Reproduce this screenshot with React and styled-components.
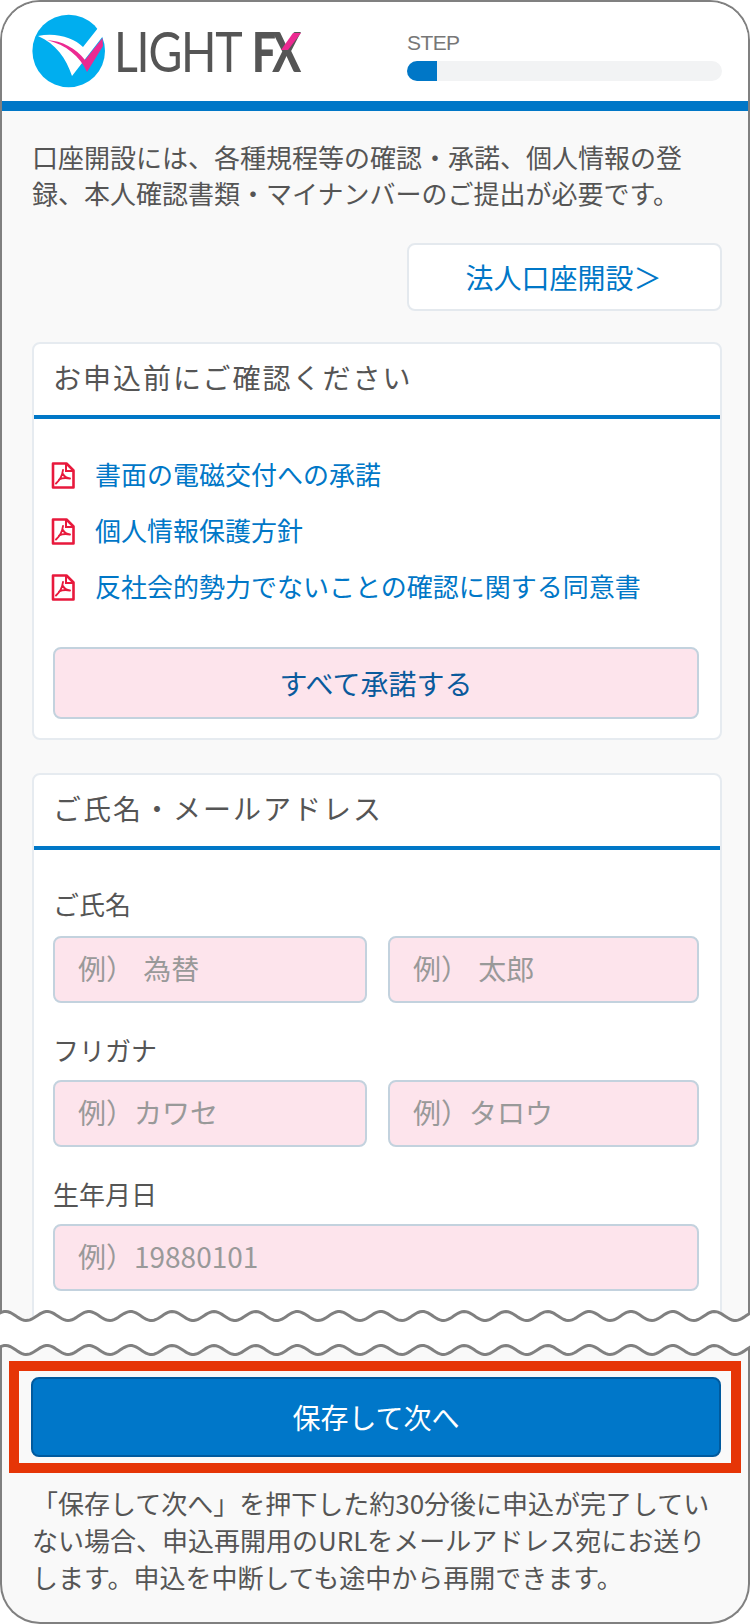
import React from 'react'
import styled, { createGlobalStyle } from 'styled-components'

const GlobalStyle = createGlobalStyle`
    html, body {
        margin: 0;
        padding: 0;
        background: #fff;
    }
    body {
        font-family: "Noto Sans CJK JP", "Liberation Sans", sans-serif;
        color: #555;
    }
    * {
        box-sizing: border-box;
    }
`

const Page = styled.div`
    position: relative;
    width: 750px;
    height: 1624px;
    overflow: hidden;
`

const TopPanel = styled.div`
    height: 1333px;
    background: #f9f9f9;
    border: 2px solid #808080;
    border-bottom: 0;
    border-radius: 40px 40px 0 0;
    overflow: hidden;
`

const BottomPanel = styled.div`
    height: 291px;
    padding: 28px 7px 0;
    background: #f9f9f9;
    border: 2px solid #808080;
    border-top: 0;
    border-radius: 0 0 40px 40px;
`

const Header = styled.header`
    display: flex;
    align-items: flex-start;
    justify-content: space-between;
    height: 109px;
    padding: 0 26px 0 30px;
    background: #fff;
    border-bottom: 10px solid #0077c7;
`

const LogoMark = styled.svg`
    display: block;
    margin-top: 11px;
`

const StepBlock = styled.div`
    width: 315px;
    margin-top: 29px;
`

const StepLabel = styled.div`
    font-family: "Liberation Sans", sans-serif;
    font-size: 21px;
    letter-spacing: -0.6px;
    line-height: 24px;
    color: #777;
`

const StepTrack = styled.div`
    height: 20px;
    margin-top: 6px;
    border-radius: 10px;
    background: #f2f3f4;
    overflow: hidden;
`

const StepFill = styled.div`
    height: 100%;
    width: ${props => props.$width}px;
    background: #0077c7;
`

const Content = styled.main`
    padding: 28px 26px 0 30px;
`

const Intro = styled.p`
    margin: 0;
    font-size: 26px;
    line-height: 36px;
    color: #555;
`

const CorporateRow = styled.div`
    display: flex;
    justify-content: flex-end;
    margin-top: 32px;
`

const CorporateLink = styled.a`
    display: flex;
    align-items: center;
    justify-content: center;
    width: 315px;
    height: 68px;
    padding-right: 2px;
    font-size: 28px;
    color: #0077c7;
    background: #fff;
    border: 2px solid #e4e9ee;
    border-radius: 8px;
`

const Card = styled.section`
    margin-top: ${props => props.$top}px;
    background: #fff;
    border: 2px solid #e6ebf0;
    border-radius: 8px;
`

const CardTitle = styled.h2`
    margin: 0;
    height: 75px;
    padding: 0 19px;
    font-size: 28px;
    letter-spacing: 2px;
    font-weight: 400;
    line-height: 66px;
    color: #555;
    border-bottom: 4px solid #0077c7;
`

const CardBody = styled.div`
    padding: ${props => props.$top}px 21px ${props => props.$bottom}px 19px;
`

const DocRow = styled.a`
    display: flex;
    align-items: center;
    height: 56px;
    font-size: 26px;
    color: #0077c7;
`

const PdfIcon = styled.svg`
    flex: none;
    margin: 4px 20px 0 -2px;
`

const AcceptButton = styled.button`
    display: block;
    width: 100%;
    height: 72px;
    margin-top: 34px;
    font: inherit;
    font-size: 28px;
    color: #0a5a9c;
    background: #fde4ec;
    border: 2px solid #c3d2de;
    border-radius: 8px;
`

const FieldLabel = styled.label`
    display: block;
    margin-top: ${props => props.$top}px;
    font-size: 26px;
    line-height: 36px;
    color: #555;
`

const FieldRow = styled.div`
    display: grid;
    grid-template-columns: 314px 311px;
    gap: 21px;
    margin-top: ${props => props.$top || 12}px;
`

const TextField = styled.input`
    display: block;
    width: 100%;
    height: 67px;
    padding: 0 22px 3px 23px;
    font: inherit;
    font-size: 28px;
    word-spacing: 3px;
    background: #fde4ec;
    border: 2px solid #c3d2de;
    border-radius: 8px;
    grid-column: ${props => (props.$wide ? '1 / -1' : 'auto')};

    &::placeholder {
        color: #999;
        opacity: 1;
    }
`

const Tear = styled.svg`
    position: absolute;
    left: 0;
    top: 1306px;
    display: block;
`

const SaveFrame = styled.div`
    height: 112px;
    padding: 6px 10px 6px 12px;
    border: 10px solid #e63507;
`

const SaveButton = styled.button`
    display: block;
    width: 100%;
    height: 80px;
    font: inherit;
    font-size: 28px;
    color: #fff;
    background: #0077c9;
    border: 2px solid #005a9e;
    border-radius: 8px;
`

const Note = styled.p`
    margin: 11px 0 0 23px;
    font-size: 26px;
    line-height: 37px;
    color: #555;
    white-space: nowrap;
`

const docs = [
    '書面の電磁交付への承諾',
    '個人情報保護方針',
    '反社会的勢力でないことの確認に関する同意書',
]

const Logo = () => (
    <LogoMark width="272" height="76" viewBox="32 13 272 76">
        <circle cx="68.7" cy="51" r="36.3" fill="#00aeef" />
        <path d="M38 36 C56 32 74 38 83 47 L98 28 L103 36 L72 76 C66 58 56 44 38 36 Z" fill="#fff" />
        <path d="M47 40 C62 41 76 48 85 60 L102.5 38 L103 46 L87 72 C80 56 66 45 47 40 Z" fill="#ec2a91" />
        <text
            transform="translate(114 72) scale(.83 1)"
            fontFamily="Lato, sans-serif"
            fontSize="56"
            letterSpacing="-1.5"
            fill="#555"
        >
            LIGHT
        </text>
        <text
            transform="translate(252 72) scale(.76 1)"
            fontFamily="Lato, sans-serif"
            fontWeight="900"
            fontSize="56"
            letterSpacing="-5"
            fill="#555"
        >
            FX
        </text>
        <path d="M293 33 H301 L288 50 H281 Z" fill="#ec2a91" />
    </LogoMark>
)

const Pdf = () => (
    <PdfIcon width="24" height="27" viewBox="0 0 24 27" fill="none" stroke="#e8193c">
        <path d="M2 1.5 H15.5 L22.5 8.5 V25.5 H2 Z" strokeWidth="2.6" strokeLinejoin="round" />
        <path d="M15 2 V9 H22" strokeWidth="2" />
        <path
            d="M12 8 C11.5 12 9 18 5 21.5 M8 17.5 C11 16 15 15.5 19 16.5 M12 12 C13 14 15 16 19 16.5"
            strokeWidth="1.9"
            strokeLinecap="round"
        />
    </PdfIcon>
)

// 破れ目の波線
const wavePoints = y => {
    const points = []
    for (let x = -2; x <= 752; x += 2) {
        points.push([x, y - 4.5 * Math.cos((2 * Math.PI * (x - 5.5)) / 41.7)])
    }
    return points
}

const toAttr = points => points.map(p => p.join(',')).join(' ')

const TearEdge = () => {
    const upper = wavePoints(10)
    const lower = wavePoints(44)
    return (
        <Tear width="750" height="54" viewBox="0 0 750 54">
            <polygon points={toAttr([...upper, ...[...lower].reverse()])} fill="#fff" />
            <polyline points={toAttr(upper)} fill="none" stroke="#808080" strokeWidth="3" />
            <polyline points={toAttr(lower)} fill="none" stroke="#808080" strokeWidth="3" />
        </Tear>
    )
}

const App = () => (
    <Page>
        <GlobalStyle />
        <TopPanel>
            <Header>
                <Logo />
                <StepBlock>
                    <StepLabel>STEP</StepLabel>
                    <StepTrack>
                        <StepFill $width={30} />
                    </StepTrack>
                </StepBlock>
            </Header>
            <Content>
                <Intro>
                    口座開設には、各種規程等の確認・承諾、個人情報の登
                    <br />
                    録、本人確認書類・マイナンバーのご提出が必要です。
                </Intro>
                <CorporateRow>
                    <CorporateLink>法人口座開設＞</CorporateLink>
                </CorporateRow>
                <Card $top={31}>
                    <CardTitle>お申込前にご確認ください</CardTitle>
                    <CardBody $top={26} $bottom={19}>
                        {docs.map(doc => (
                            <DocRow key={doc}>
                                <Pdf />
                                {doc}
                            </DocRow>
                        ))}
                        <AcceptButton>すべて承諾する</AcceptButton>
                    </CardBody>
                </Card>
                <Card $top={33}>
                    <CardTitle>ご氏名・メールアドレス</CardTitle>
                    <CardBody $top={0} $bottom={80}>
                        <FieldLabel $top={36}>ご氏名</FieldLabel>
                        <FieldRow $top={14}>
                            <TextField placeholder="例） 為替" />
                            <TextField placeholder="例） 太郎" />
                        </FieldRow>
                        <FieldLabel $top={29}>フリガナ</FieldLabel>
                        <FieldRow>
                            <TextField placeholder="例）カワセ" />
                            <TextField placeholder="例）タロウ" />
                        </FieldRow>
                        <FieldLabel $top={29}>生年月日</FieldLabel>
                        <FieldRow>
                            <TextField $wide placeholder="例）19880101" />
                        </FieldRow>
                    </CardBody>
                </Card>
            </Content>
        </TopPanel>
        <BottomPanel>
            <SaveFrame>
                <SaveButton>保存して次へ</SaveButton>
            </SaveFrame>
            <Note>
                「保存して次へ」を押下した約30分後に申込が完了してい
                <br />
                ない場合、申込再開用のURLをメールアドレス宛にお送り
                <br />
                します。申込を中断しても途中から再開できます。
            </Note>
        </BottomPanel>
        <TearEdge />
    </Page>
)

export default App
